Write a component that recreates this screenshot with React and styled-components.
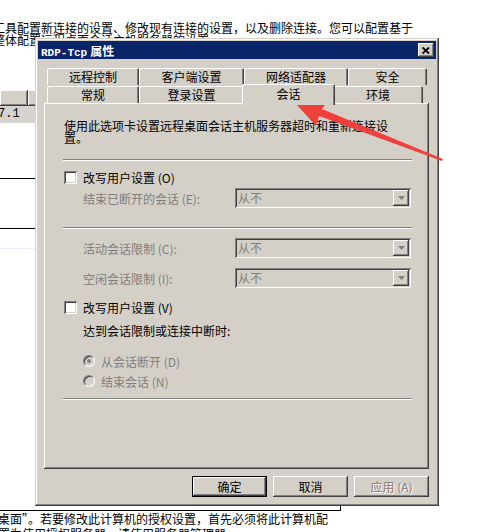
import React from 'react';
import styled, { createGlobalStyle } from 'styled-components';

const GlobalStyle = createGlobalStyle`
  html, body { margin: 0; padding: 0; background: #fff; }
  body { font-family: "Noto Sans CJK SC", "Noto Sans", sans-serif; font-size: 12px; }
`;

const FACE = '#d4d0c8';
const raised = `inset -1px -1px #404040, inset 1px 1px #fff, inset -2px -2px #808080`;
const sunken = `inset 1px 1px #808080, inset -1px -1px #fff, inset 2px 2px #404040, inset -2px -2px ${FACE}`;

const Page = styled.div`
  position: relative;
  width: 501px;
  height: 532px;
  overflow: hidden;
  background: #fff;
  color: #000;
  font-size: 12px;
`;

// ---- the window behind the dialog ----
const Para = styled.p`
  margin: ${p => p.$top || 0}px 0 0 ${p => p.$left || 0}px;
  width: ${p => p.$width}px;
  line-height: ${p => p.$lh}px;
`;

const ListFrame = styled.div`
  margin-top: 44px;
  width: 340px;
  height: 420px;
  border-right: 1px solid #000;
  border-bottom: 1px solid #000;
`;

const ListHead = styled.div`
  display: flex;
  height: 16px;
`;

const HeadCell = styled.div`
  width: ${p => p.$w}px;
  box-sizing: border-box;
  background: ${FACE};
  box-shadow: ${raised};
  padding-left: 3px;
  line-height: 16px;
`;

const ListRow = styled.div`
  height: 17px;
  background: #d6d3ce;
  font-family: "Liberation Mono", monospace;
  font-size: 12px;
  line-height: 17px;
  text-indent: -2px;
`;

const Rule = styled.div`
  margin-top: ${p => p.$top}px;
  height: 1px;
  width: 340px;
  background: ${p => p.$color || '#000'};
`;

// ---- dialog ----
const Dialog = styled.div`
  position: absolute;
  left: 35px;
  top: 38px;
  width: 404px;
  height: 468px;
  box-sizing: border-box;
  padding: 3px;
  background: ${FACE};
  box-shadow: inset -1px -1px #404040, inset 1px 1px ${FACE}, inset -2px -2px #808080, inset 2px 2px #fff;
  display: flex;
  flex-direction: column;
`;

const TitleBar = styled.div`
  height: 18px;
  background: #0a246a;
  display: flex;
  align-items: center;
  justify-content: space-between;
  padding-left: 3px;
`;

const Title = styled.div`
  color: #fff;
  font-weight: bold;
  font-family: "Liberation Mono", "Noto Sans CJK SC", monospace;
  font-size: 11px;
  span { font-family: "Noto Sans CJK SC", sans-serif; font-size: 12px; margin-left: 3px; }
`;

const CloseBtn = styled.div`
  width: 16px;
  height: 14px;
  margin-right: 2px;
  background: ${FACE};
  box-shadow: ${raised};
  display: flex;
  align-items: center;
  justify-content: center;
`;

const Body = styled.div`
  flex: 1;
  padding: 9px 7px 6px 6px;
  display: flex;
  flex-direction: column;
`;

const TabStrip = styled.div`
  position: relative;
  z-index: 1;
  margin-left: 3px;
  height: 35px;
`;

const TabLine = styled.div`
  display: flex;
  align-items: flex-start;
  height: 17px;
  margin-top: ${p => p.$top || 0}px;
`;

const Tab = styled.div`
  width: ${p => p.$w}px;
  height: ${p => (p.$active ? 21 : 17)}px;
  margin: ${p => (p.$active ? '-2px -2px -2px -2px' : '0')};
  position: relative;
  z-index: ${p => (p.$active ? 2 : 1)};
  box-sizing: border-box;
  background: ${FACE};
  border-radius: 2px 2px 0 0;
  box-shadow: inset 1px 1px #fff, inset -1px 0 #404040, inset -2px 0 #808080;
  text-align: center;
  line-height: ${p => (p.$active ? 19 : 17)}px;
`;

const Panel = styled.div`
  position: relative;
  z-index: 0;
  height: 366px;
  box-sizing: border-box;
  padding: 0 17px 0 19px;
  box-shadow: ${raised};
  display: flex;
  flex-direction: column;
`;

const Desc = styled.div`
  margin-top: 17px;
  width: 340px;
  padding-left: 1px;
  line-height: 12px;
`;

const Etch = styled.div`
  margin-top: ${p => p.$top}px;
  height: 2px;
  box-sizing: border-box;
  border-top: 1px solid #808080;
  border-bottom: 1px solid #fff;
`;

const CheckRow = styled.label`
  margin-top: ${p => p.$top}px;
  height: 16px;
  display: flex;
  align-items: center;
  padding-left: 1px;
  gap: 6px;
`;

const CheckBox = styled.span`
  width: 13px;
  height: 13px;
  box-sizing: border-box;
  background: #fff;
  box-shadow: ${sunken};
`;

const FieldRow = styled.div`
  margin-top: ${p => p.$top}px;
  height: 20px;
  display: flex;
  align-items: center;
  padding-left: 20px;
`;

const Label = styled.span`
  color: ${p => (p.$disabled ? '#808080' : '#000')};
`;

const Select = styled.div`
  margin-left: auto;
  margin-right: 1px;
  width: 176px;
  height: 20px;
  box-sizing: border-box;
  padding: 2px;
  background: ${FACE};
  box-shadow: ${sunken};
  display: flex;
  align-items: center;
  color: #808080;
  span { flex: 1; padding-left: 1px; line-height: 16px; }
`;

const DropBtn = styled.div`
  width: 16px;
  height: 16px;
  box-sizing: border-box;
  background: ${FACE};
  box-shadow: ${raised};
  display: flex;
  align-items: center;
  justify-content: center;
`;

const TextRow = styled.div`
  margin-top: ${p => p.$top}px;
  height: 16px;
  line-height: 16px;
  padding-left: 20px;
`;

const RadioRow = styled.div`
  margin-top: ${p => p.$top}px;
  height: 16px;
  display: flex;
  align-items: center;
  padding-left: 20px;
  gap: 6px;
  color: #808080;
`;

const Radio = styled.span`
  width: 12px;
  height: 12px;
  box-sizing: border-box;
  border-radius: 50%;
  border: 1px solid;
  border-color: #808080 #fff #fff #808080;
  box-shadow: inset 1px 1px #404040;
  background: ${FACE};
  display: flex;
  align-items: center;
  justify-content: center;
  &::after {
    content: '';
    width: 4px;
    height: 4px;
    border-radius: 50%;
    background: ${p => (p.$on ? '#808080' : 'transparent')};
  }
`;

const ButtonBar = styled.div`
  margin-top: 7px;
  display: flex;
  justify-content: flex-end;
  gap: 6px;
`;

const Button = styled.div`
  width: 75px;
  height: 21px;
  box-sizing: border-box;
  background: ${FACE};
  border: ${p => (p.$default ? '1px solid #000' : 'none')};
  box-shadow: ${raised};
  text-align: center;
  line-height: ${p => (p.$default ? 19 : 21)}px;
  color: ${p => (p.$disabled ? '#808080' : '#000')};
  text-shadow: ${p => (p.$disabled ? '1px 1px 0 #fff' : 'none')};
`;

const Overlay = styled.svg`
  position: absolute;
  left: 0;
  top: 0;
  pointer-events: none;
`;

const tabsBack = [
  ['远程控制', 92],
  ['客户端设置', 105],
  ['网络适配器', 104],
  ['安全', 79],
];
const tabsFront = [
  ['常规', 92],
  ['登录设置', 105],
  ['会话', 93, true],
  ['环境', 90],
];

const Arrow = () => (
  <svg width="7" height="4" viewBox="0 0 7 4">
    <path d="M0 0h7L3.5 4z" fill="#808080" />
  </svg>
);

export default function App() {
  return (
    <Page>
      <GlobalStyle />
      <Para $top={22} $left={-7} $width={425} $lh={12}>
        工具配置新连接的设置、修改现有连接的设置，以及删除连接。您可以配置基于整体配置远程桌面会话主机服务器的设置。
      </Para>
      <ListFrame>
        <ListHead>
          <HeadCell $w={28} />
          <HeadCell $w={312}>·</HeadCell>
        </ListHead>
        <ListRow>7.1</ListRow>
        <Rule $top={55} />
        <Rule $top={49} />
        <Rule $top={19} $color="#e8eef8" />
      </ListFrame>
      <Para $top={0} $left={-2} $width={330} $lh={15}>
        桌面”。若要修改此计算机的授权设置，首先必须将此计算机配置为使用授权服务器，请使用服务器管理器。
      </Para>

      <Dialog>
        <TitleBar>
          <Title>
            RDP-Tcp<span>属性</span>
          </Title>
          <CloseBtn>
            <svg width="8" height="7" viewBox="0 0 8 7">
              <path d="M0.5 0.5L7 6.5M7 0.5L0.5 6.5" stroke="#000" strokeWidth="1.8" />
            </svg>
          </CloseBtn>
        </TitleBar>
        <Body>
          <TabStrip>
            <TabLine>
              {tabsBack.map(([t, w]) => (
                <Tab key={t} $w={w}>{t}</Tab>
              ))}
            </TabLine>
            <TabLine $top={1}>
              {tabsFront.map(([t, w, a]) => (
                <Tab key={t} $w={w} $active={a}>{t}</Tab>
              ))}
            </TabLine>
          </TabStrip>
          <Panel>
            <Desc>使用此选项卡设置远程桌面会话主机服务器超时和重新连接设置。</Desc>
            <Etch $top={15} />
            <CheckRow $top={8}>
              <CheckBox />
              <span>改写用户设置 (O)</span>
            </CheckRow>
            <FieldRow $top={3}>
              <Label $disabled>结束已断开的会话 (E):</Label>
              <Select><span>从不</span><DropBtn><Arrow /></DropBtn></Select>
            </FieldRow>
            <Etch $top={19} />
            <FieldRow $top={9}>
              <Label $disabled>活动会话限制 (C):</Label>
              <Select><span>从不</span><DropBtn><Arrow /></DropBtn></Select>
            </FieldRow>
            <FieldRow $top={10}>
              <Label $disabled>空闲会话限制 (I):</Label>
              <Select><span>从不</span><DropBtn><Arrow /></DropBtn></Select>
            </FieldRow>
            <CheckRow $top={11}>
              <CheckBox />
              <span>改写用户设置 (V)</span>
            </CheckRow>
            <TextRow $top={8}>达到会话限制或连接中断时:</TextRow>
            <RadioRow $top={14}>
              <Radio $on />
              <span>从会话断开 (D)</span>
            </RadioRow>
            <RadioRow $top={4}>
              <Radio />
              <span>结束会话 (N)</span>
            </RadioRow>
            <Etch $top={9} />
          </Panel>
          <ButtonBar>
            <Button $default>确定</Button>
            <Button>取消</Button>
            <Button $disabled>应用 (A)</Button>
          </ButtonBar>
        </Body>
      </Dialog>

      <Overlay width="501" height="532" viewBox="0 0 501 532">
        <polygon
          points="296,104 327,102 322,109 443,159 442,161 319,116 316,126"
          fill="#f0403c"
        />
      </Overlay>
    </Page>
  );
}
